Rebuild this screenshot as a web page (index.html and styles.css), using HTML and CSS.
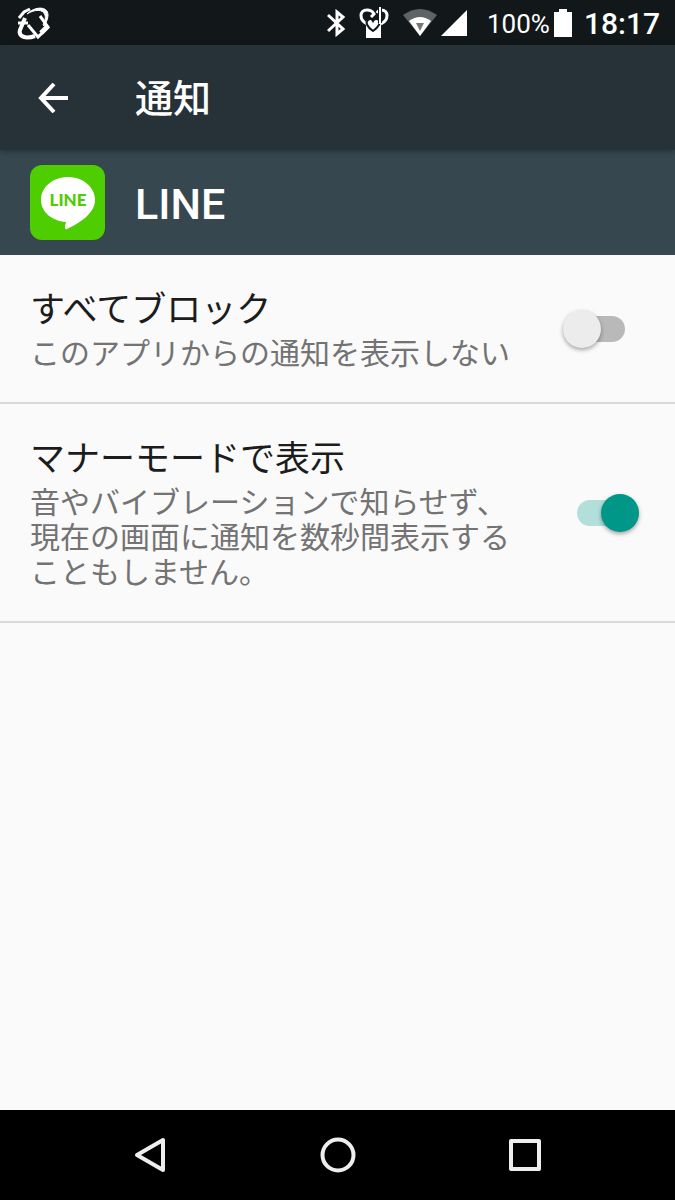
FILE: index.html
```html
<!DOCTYPE html>
<html lang="ja">
<head>
<meta charset="utf-8">
<meta name="viewport" content="width=device-width, initial-scale=1">
<title>通知</title>
<link rel="stylesheet" href="styles.css">
</head>
<body>
<div class="status-bar">
  <svg class="app-icon" width="34" height="36" viewBox="0 0 34 36" fill="none" stroke="#fff" aria-hidden="true">
    <path d="M2 13 7 7 13 4" stroke-width="3"/>
    <path d="M10 9C18 1 31 1 31 10C31 14 29 18 27 21L26 20C28 16 29 13 28 10C26 4 18 4 10 9Z" fill="#fff" stroke-width="1"/>
    <path d="M23 11 31 22 21 32 11 20" stroke-width="3"/>
    <path d="M24 28 31 21" stroke-width="5"/>
    <path d="M8 13 3 25C1 32 9 34 18 31" stroke-width="4"/>
    <path d="M1 18H11" stroke-width="3"/>
  </svg>
  <div class="status-icons">
    <svg width="18" height="28" viewBox="0 0 18 28" fill="none" stroke="#fff" stroke-width="3" aria-hidden="true">
      <path d="M1 6 16 20 10 25V3L16 8 1 22"/>
    </svg>
    <svg class="manner" width="30" height="32" viewBox="0 0 30 32" aria-hidden="true">
      <path d="M8 17C0 13 0 3 8 3C12 3 14 5 15 7L12 10M18 6C19 4 20 3 22 3C30 3 30 13 22 17" fill="none" stroke="#fff" stroke-width="3"/>
      <path d="M7 13H22V31H7Z" fill="#fff"/>
      <path d="M14 24C8 20 6 15 9 13C11 11 13 12 14 14C15 12 18 11 20 13C22 15 20 20 14 24Z" fill="#fff" stroke="#121719" stroke-width="2"/>
      <path d="M19 0H23V16H19Z" fill="#121719"/>
      <path d="M20 0H22V17H20Z" fill="#fff"/>
    </svg>
    <svg class="wifi" width="34" height="28" viewBox="0 0 34 28" aria-hidden="true">
      <path d="M0 6Q17-6 34 6L17 27Z" fill="#606365"/>
      <path d="M6 12Q17 4 28 12L17 27Z" fill="#fff"/>
      <path d="M13 14H21L17 22Z" fill="#777"/>
    </svg>
    <svg class="signal" width="26" height="26" viewBox="0 0 26 26" aria-hidden="true"><path d="M26 0V26H0Z" fill="#fff"/></svg>
    <span class="percent">100%</span>
    <svg class="battery" width="18" height="28" viewBox="0 0 18 28" aria-hidden="true"><path d="M5 0H13V3H18V28H0V3H5Z" fill="#fff"/></svg>
    <time class="clock">18:17</time>
  </div>
</div>
<header class="app-bar">
  <button class="back" type="button" aria-label="戻る">
    <svg width="30" height="30" viewBox="0 0 30 30" fill="none" stroke="#fff" stroke-width="4" aria-hidden="true"><path d="M16 1 3 15 16 29M2 15H30"/></svg>
  </button>
  <h1 class="page-title">通知</h1>
</header>
<section class="app-header">
  <svg class="logo" width="75" height="75" viewBox="0 0 75 75" aria-hidden="true">
    <rect width="75" height="75" rx="12" fill="#4ecd00"/>
    <path d="M38 12C53 12 65 22 65 35C65 48 50 58 37 64C35 65 35 63 35 61L36 57C22 56 11 47 11 35C11 22 23 12 38 12Z" fill="#fff"/>
    <text class="logo-text" x="38" y="41" text-anchor="middle">LINE</text>
  </svg>
  <h2 class="app-name">LINE</h2>
</section>
<main class="settings">
  <label class="row" for="block">
    <span class="row-text">
      <span class="row-title">すべてブロック</span>
      <span class="row-summary">このアプリからの通知を表示しない</span>
    </span>
    <input class="switch" id="block" type="checkbox" role="switch">
  </label>
  <label class="row" for="silent">
    <span class="row-text">
      <span class="row-title">マナーモードで表示</span>
      <span class="row-summary">音やバイブレーションで知らせず、現在の画面に通知を数秒間表示することもしません。</span>
    </span>
    <input class="switch" id="silent" type="checkbox" role="switch" checked>
  </label>
</main>
<nav class="nav-bar">
  <button class="nav-button" type="button" aria-label="戻る">
    <svg width="36" height="36" viewBox="0 0 36 36" aria-hidden="true"><path d="M31 3V33L5 18Z"/></svg>
  </button>
  <button class="nav-button" type="button" aria-label="ホーム">
    <svg width="36" height="36" viewBox="0 0 36 36" aria-hidden="true"><circle cx="18" cy="18" r="15.5"/></svg>
  </button>
  <button class="nav-button" type="button" aria-label="最近使ったアプリ">
    <svg width="36" height="36" viewBox="0 0 36 36" aria-hidden="true"><rect x="4" y="4" width="28" height="28"/></svg>
  </button>
</nav>
</body>
</html>
```
FILE: styles.css
```css
* {
  box-sizing: border-box;
}

body {
  margin: 0;
  min-height: 100vh;
  display: flex;
  flex-direction: column;
  background: #fafafa;
  color: #1c1c1c;
  font-family: Roboto, "Noto Sans CJK JP", sans-serif;
}

button {
  display: flex;
  align-items: center;
  justify-content: center;
  padding: 0;
  border: 0;
  background: none;
  cursor: pointer;
}

.status-bar {
  display: flex;
  align-items: center;
  justify-content: space-between;
  height: 45px;
  padding: 0 15px 0 17px;
  background: #121719;
  color: #fff;
}

.status-icons {
  display: flex;
  align-items: center;
}

.manner {
  margin-left: 14px;
}

.wifi {
  margin-left: 14px;
}

.signal {
  margin: 0 20px 0 4px;
}

.percent {
  padding-top: 2px;
  font-size: 26px;
  line-height: 30px;
}

.battery {
  margin: 0 12px 0 4px;
}

.clock {
  padding-top: 2px;
  font-size: 30px;
  font-weight: 500;
  line-height: 36px;
}

.app-bar {
  position: relative;
  display: flex;
  align-items: center;
  height: 105px;
  background: #273238;
  color: #fff;
  box-shadow: 0 1px 6px rgba(0, 0, 0, 0.4);
}

.back {
  width: 105px;
  height: 105px;
  margin-right: 30px;
}

.page-title {
  margin: 0;
  padding-top: 2px;
  font-size: 38px;
  font-weight: 500;
  line-height: 56px;
}

.app-header {
  display: flex;
  align-items: center;
  gap: 30px;
  height: 105px;
  padding: 0 30px;
  background: #37474f;
  color: #fff;
}

.logo-text {
  fill: #4ecd00;
  font-family: Lato, sans-serif;
  font-size: 17px;
  font-weight: 900;
}

.app-name {
  margin: 0;
  padding-top: 2px;
  font-size: 43px;
  font-weight: 500;
  line-height: 52px;
}

.settings {
  flex: 1;
}

.row {
  display: flex;
  align-items: center;
  gap: 40px;
  padding: 31px 36px 31px 30px;
  border-bottom: 2px solid #dadada;
  cursor: pointer;
}

.row-text {
  flex: 1;
  display: flex;
  flex-direction: column;
}

.row-title {
  font-size: 35px;
  line-height: 50px;
}

.row-summary {
  color: #737373;
  font-size: 30px;
  line-height: 35px;
}

.switch {
  appearance: none;
  position: relative;
  display: flex;
  flex: none;
  align-items: center;
  width: 76px;
  height: 38px;
  margin: 0;
  cursor: pointer;
}

.switch::before {
  content: "";
  position: absolute;
  inset: 6px 14px;
  border-radius: 13px;
  background: #b9b9b9;
}

.switch::after {
  content: "";
  position: relative;
  width: 38px;
  height: 38px;
  border-radius: 50%;
  background: #ececec;
  box-shadow: 0 2px 4px rgba(0, 0, 0, 0.35);
}

.switch:checked {
  justify-content: flex-end;
}

.switch:checked::before {
  background: #b2dfda;
}

.switch:checked::after {
  background: #009688;
}

.nav-bar {
  display: flex;
  align-items: center;
  justify-content: center;
  height: 90px;
  padding: 0 56px;
  background: #000;
}

.nav-button {
  flex: 1;
  height: 90px;
}

.nav-button svg {
  fill: none;
  stroke: #eee;
  stroke-width: 4;
  stroke-linejoin: round;
}
```
